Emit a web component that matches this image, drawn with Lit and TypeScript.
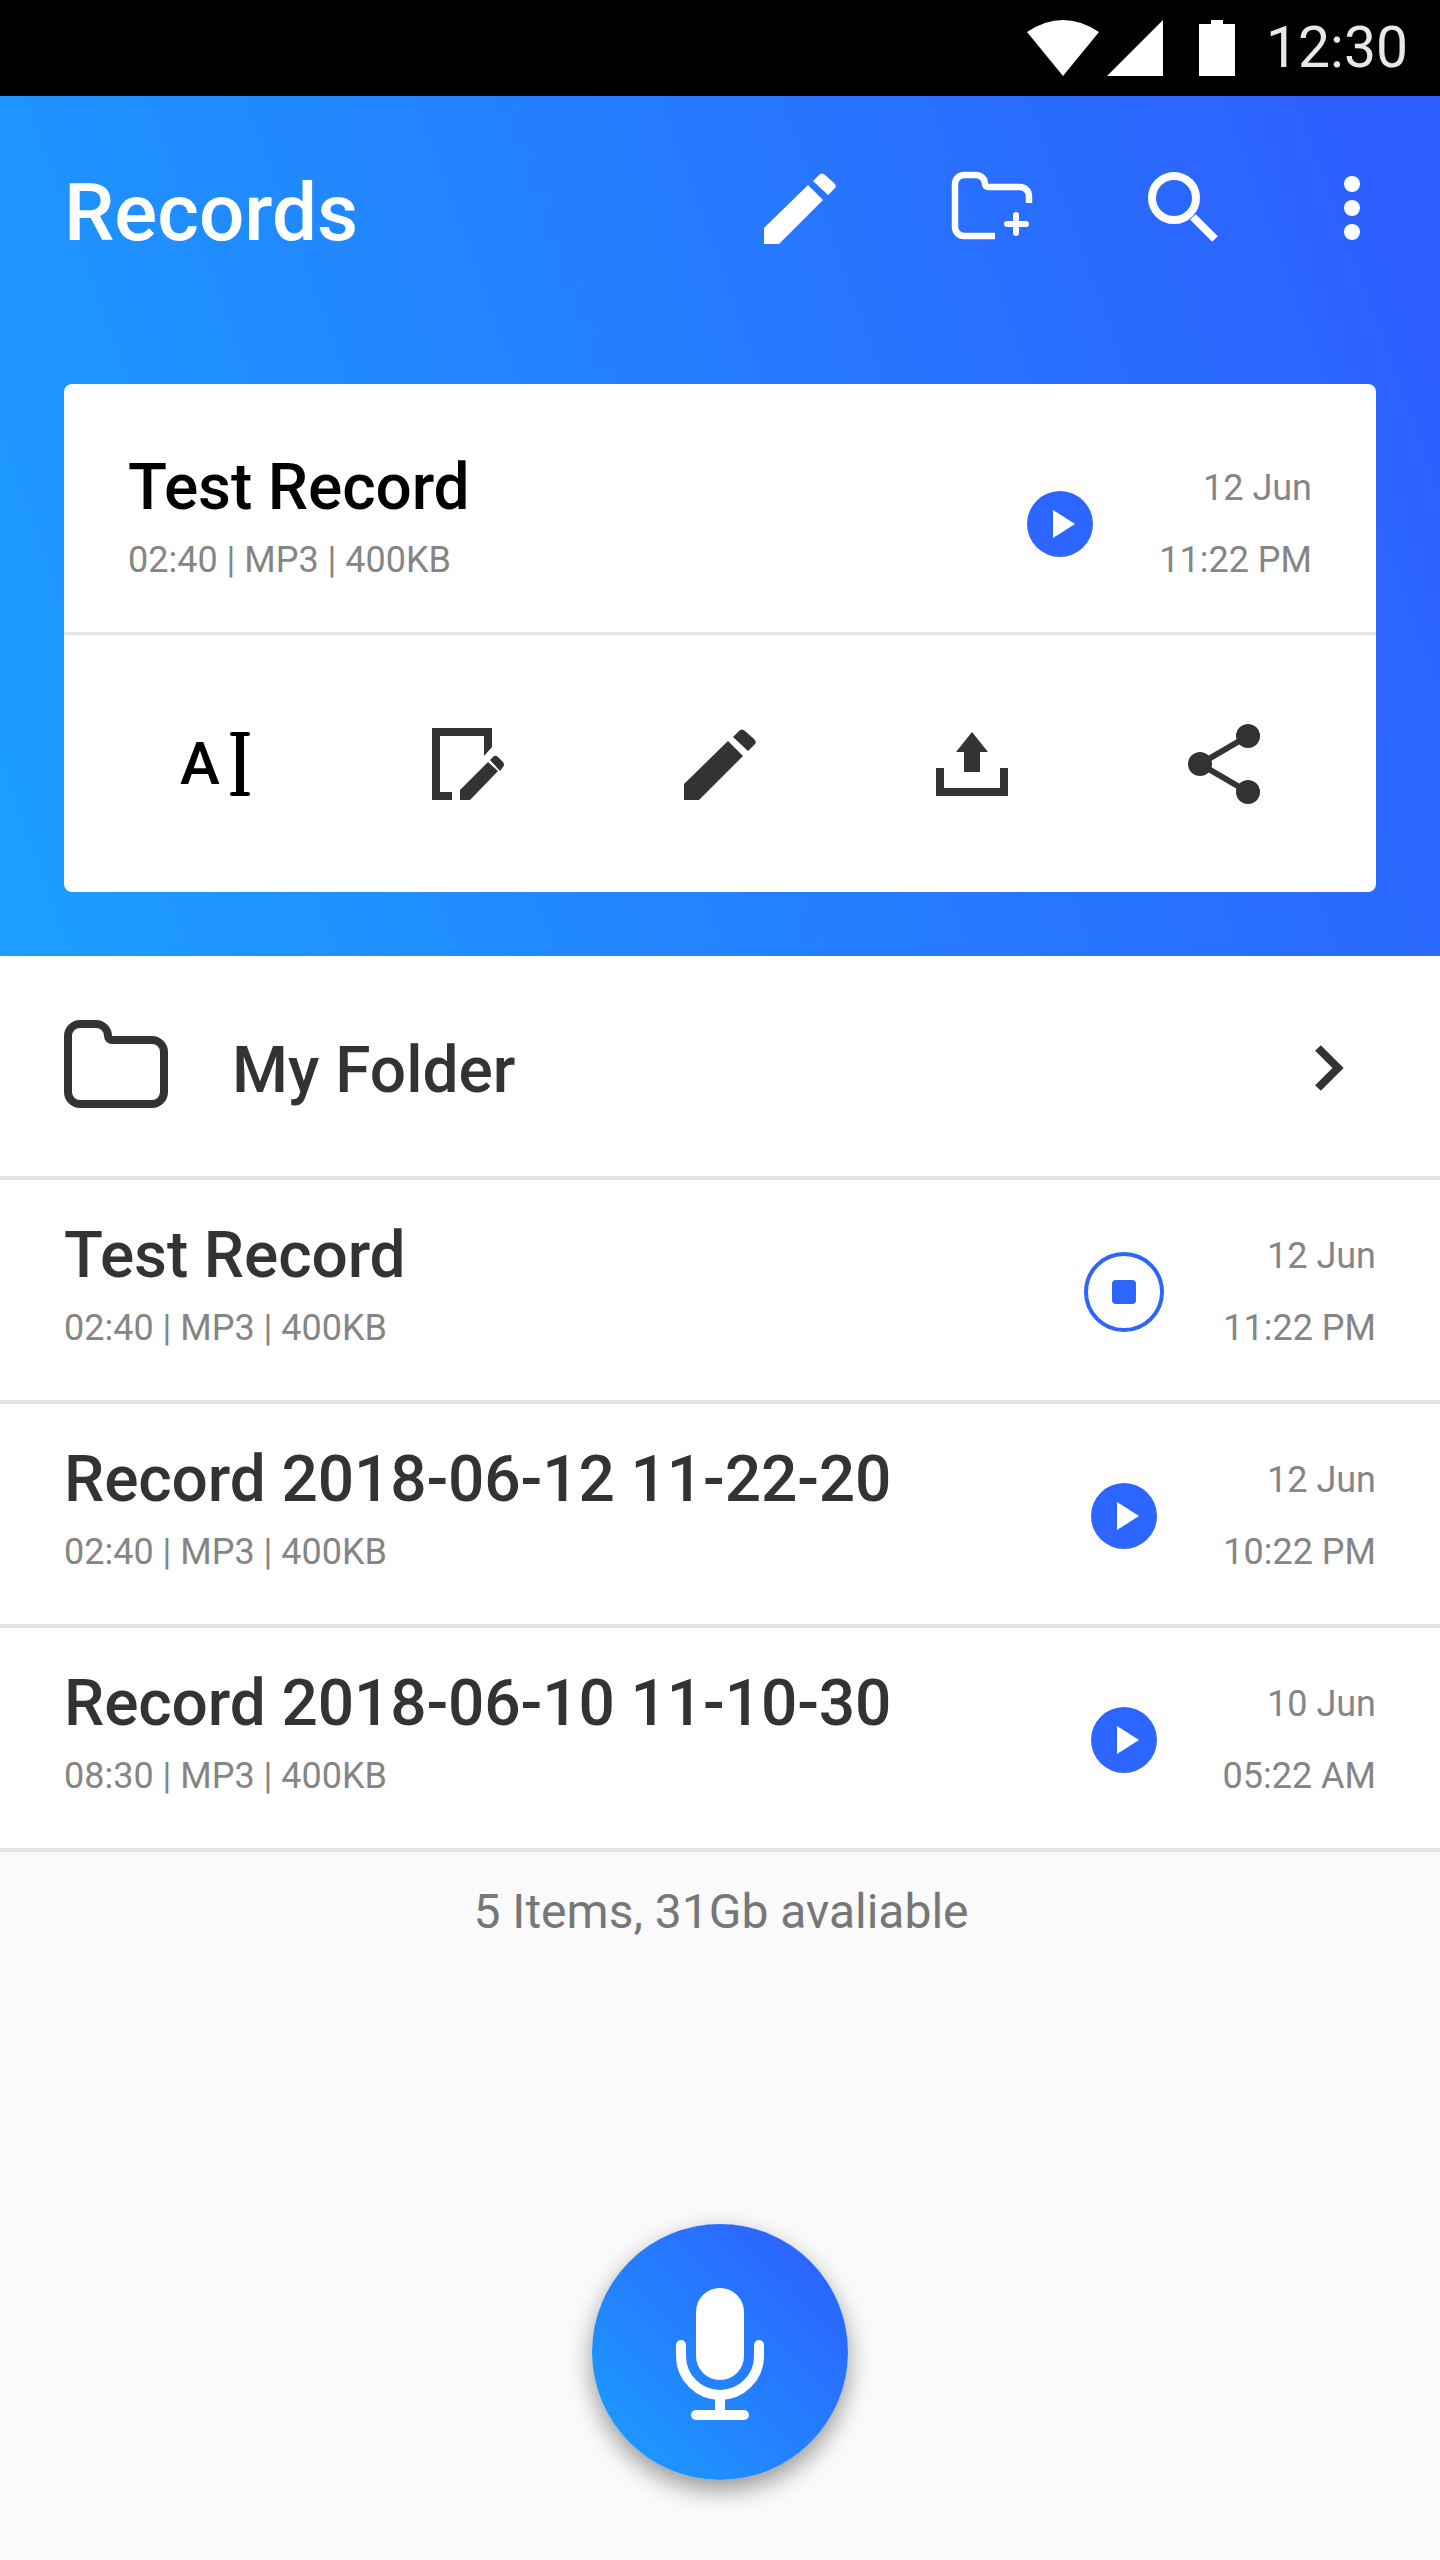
import { LitElement, html, css, svg } from "lit";
import { customElement } from "lit/decorators.js";

const pencil = svg`<path d="M0 56 44 13 59 28 15 72H0Z"/><path d="M49 9 55 3Q58 0 61 3L70 11Q73 14 71 16L64 23Z"/>`;

const records = [
  { title: "Test Record", meta: "02:40 | MP3 | 400KB", day: "12 Jun", time: "11:22 PM", playing: true },
  { title: "Record 2018-06-12 11-22-20", meta: "02:40 | MP3 | 400KB", day: "12 Jun", time: "10:22 PM", playing: false },
  { title: "Record 2018-06-10 11-10-30", meta: "08:30 | MP3 | 400KB", day: "10 Jun", time: "05:22 AM", playing: false },
];

@customElement("app-root")
export class AppRoot extends LitElement {
  static styles = css`
    :host {
      display: block;
      width: 1440px;
      height: 2560px;
      background: #fafafa;
      font-family: Roboto, sans-serif;
      overflow: hidden;
    }

    svg {
      display: block;
      flex: none;
    }

    .status {
      display: flex;
      justify-content: flex-end;
      align-items: center;
      height: 96px;
      padding-right: 32px;
      background: #000;
      color: #e8e8e8;
      font-size: 57px;
      line-height: 96px;
      gap: 27px;
    }

    .status svg {
      width: 220px;
      height: 64px;
      fill: #fff;
    }

    .hero {
      height: 860px;
      box-sizing: border-box;
      padding-top: 64px;
      background: linear-gradient(70deg, #1b9fff, #2e5cff);
    }

    .bar {
      display: flex;
      align-items: center;
      padding: 0 40px 0 64px;
      height: 96px;
    }

    .bar h1 {
      flex: 1;
      margin: 10px 0 0;
      font-size: 80px;
      line-height: 96px;
      font-weight: 500;
      color: #fff;
    }

    .tools {
      display: flex;
      gap: 96px;
      fill: #fff;
    }

    .tools svg {
      width: 96px;
      height: 96px;
    }

    .tools .more {
      margin-left: -24px;
    }

    .card {
      margin: 128px 64px 0;
      background: #fff;
      border-radius: 8px;
    }

    .rec {
      display: flex;
      align-items: flex-start;
      padding: 34px 64px 0;
      height: 220px;
      box-sizing: border-box;
      background: #fff;
    }

    .card .rec {
      padding-top: 62px;
      background: none;
      border-bottom: 3px solid #e6e6e6;
      box-sizing: content-box;
      height: 186px;
    }

    .info {
      flex: 1;
      min-width: 0;
    }

    .title {
      margin-top: 2px;
      font-size: 64px;
      line-height: 80px;
      font-weight: 500;
      letter-spacing: -0.12px;
      color: #333;
      white-space: nowrap;
    }

    .card .title {
      color: #000;
    }

    .meta {
      font-size: 36px;
      line-height: 64px;
      color: #858585;
      white-space: nowrap;
    }

    .btn {
      width: 80px;
      height: 80px;
      margin-top: 38px;
    }

    .when {
      width: 212px;
      margin-top: 6px;
      font-size: 36px;
      line-height: 72px;
      color: #858585;
      text-align: right;
    }

    .actions {
      display: grid;
      grid-template-columns: repeat(5, 252px);
      justify-items: center;
      padding: 81px 26px 80px;
      fill: #333;
    }

    .actions svg {
      width: 96px;
      height: 96px;
    }

    .actions text {
      font-family: Roboto, sans-serif;
      font-size: 60px;
      font-weight: 500;
      fill: #000;
    }

    .folder {
      display: flex;
      align-items: center;
      gap: 64px;
      height: 220px;
      padding: 0 96px 0 64px;
      background: #fff;
    }

    .folder .name {
      flex: 1;
      margin-top: 10px;
      font-size: 64px;
      line-height: 80px;
      font-weight: 500;
      color: #333;
    }

    .folder .ficon {
      width: 104px;
      height: 88px;
      margin-bottom: 4px;
    }

    .folder .chev {
      width: 48px;
      height: 64px;
      margin-top: 4px;
    }

    .line {
      height: 4px;
      background: #e5e5e5;
    }

    .foot {
      padding: 12px 0 0 2px;
      font-size: 48px;
      line-height: 96px;
      color: #777;
      text-align: center;
    }

    .fab {
      width: 256px;
      height: 256px;
      margin: 264px auto 0;
      border-radius: 50%;
      background: linear-gradient(45deg, #1b9fff, #2e5cff);
      box-shadow: 0 10px 24px rgba(0, 0, 0, 0.4);
    }

    .fab svg {
      width: 256px;
      height: 256px;
    }
  `;

  renderPlay() {
    return html`<svg class="btn" viewBox="0 0 80 80">
      <circle cx="40" cy="40" r="33" fill="#2d66ff"/>
      <path d="M33 26 55 40 33 54Z" fill="#fff"/>
    </svg>`;
  }

  renderStop() {
    return html`<svg class="btn" viewBox="0 0 80 80">
      <circle cx="40" cy="40" r="38" fill="none" stroke="#2d66ff" stroke-width="4"/>
      <rect x="28" y="28" width="24" height="24" rx="4" fill="#2d66ff"/>
    </svg>`;
  }

  renderRec(r: (typeof records)[number]) {
    return html`<div class="rec">
      <div class="info">
        <div class="title">${r.title}</div>
        <div class="meta">${r.meta}</div>
      </div>
      ${r.playing ? this.renderStop() : this.renderPlay()}
      <div class="when">${r.day}<br />${r.time}</div>
    </div>`;
  }

  render() {
    return html`
      <div class="status">
        <svg viewBox="1020 16 220 64">
          <path d="M1028 32Q1064 8 1100 32L1064 76Z"/>
          <path d="M1108 76 1164 20V76Z"/>
          <path d="M1200 24H1212V20H1224V24H1236V76H1200Z"/>
        </svg>
        <span>12:30</span>
      </div>

      <div class="hero">
        <div class="bar">
          <h1>Records</h1>
          <div class="tools">
            <svg viewBox="-12 -12 96 96">${pencil}</svg>
            <svg viewBox="944 160 96 96">
              <path fill="none" stroke="#fff" stroke-width="6.5" d="M995 236H964A9 9 0 0 1 955 227V184A9 9 0 0 1 964 175H976A9 9 0 0 1 985 184A3 3 0 0 0 988 187H1020A9 9 0 0 1 1029 196V203"/>
              <path fill="none" stroke="#fff" stroke-width="6" stroke-linecap="round" d="M1007 224H1026M1016 215V233"/>
            </svg>
            <svg viewBox="1136 160 96 96">
              <circle cx="1174" cy="198" r="22" fill="none" stroke="#fff" stroke-width="8"/>
              <path fill="none" stroke="#fff" stroke-width="8" d="M1193 217 1215 239"/>
            </svg>
            <svg class="more" viewBox="1304 160 96 96">
              <circle cx="1352" cy="184" r="8"/>
              <circle cx="1352" cy="208" r="8"/>
              <circle cx="1352" cy="232" r="8"/>
            </svg>
          </div>
        </div>

        <div class="card">
          ${this.renderRec({ ...records[0], playing: false })}
          <div class="actions">
            <svg viewBox="168 716 96 96">
              <text x="180" y="784">A</text>
              <rect x="230" y="732" width="20" height="4" rx="2" fill="#000"/>
              <rect x="236" y="734" width="8" height="60" fill="#000"/>
              <rect x="230" y="792" width="20" height="4" rx="2" fill="#000"/>
            </svg>
            <svg viewBox="420 716 96 96">
              <path d="M432 728H492V747L484 756V736H440V792H452V800H432Z"/>
              <path d="M460 790 488 762 498 771 470 800H460Z"/>
              <path d="M490 760 494 756Q496 755 498 757L503 762Q505 765 503 767L500 771Z"/>
            </svg>
            <svg viewBox="-12 -12 96 96">${pencil}</svg>
            <svg viewBox="924 716 96 96">
              <path d="M936 768H944V788H1000V768H1008V796H936Z"/>
              <path d="M972 732 988 752H980V772H964V752H956Z"/>
            </svg>
            <svg viewBox="1176 716 96 96">
              <circle cx="1248" cy="736" r="12"/>
              <circle cx="1200" cy="764" r="12"/>
              <circle cx="1248" cy="792" r="12"/>
              <path fill="none" stroke="#333" stroke-width="6" d="M1248 736 1200 764 1248 792"/>
            </svg>
          </div>
        </div>
      </div>

      <div class="folder">
        <svg class="ficon" viewBox="64 1020 104 88">
          <path fill="none" stroke="#333" stroke-width="8" d="M80 1024H96A12 12 0 0 1 108 1036A4 4 0 0 0 112 1040H152A12 12 0 0 1 164 1052V1092A12 12 0 0 1 152 1104H80A12 12 0 0 1 68 1092V1036A12 12 0 0 1 80 1024Z"/>
        </svg>
        <div class="name">My Folder</div>
        <svg class="chev" viewBox="1296 1036 48 64">
          <path fill="none" stroke="#333" stroke-width="8" d="M1318 1048 1338 1068 1318 1088"/>
        </svg>
      </div>
      <div class="line"></div>

      ${records.map((r) => html`${this.renderRec(r)}<div class="line"></div>`)}

      <div class="foot">5 Items, 31Gb avaliable</div>

      <div class="fab">
        <svg viewBox="592 2224 256 256">
          <rect x="696" y="2288" width="48" height="92" rx="24" fill="#fff"/>
          <path fill="none" stroke="#fff" stroke-width="10" stroke-linecap="round" d="M681 2345V2356A39 39 0 0 0 759 2356V2345"/>
          <path d="M715 2395H725V2412H715Z" fill="#fff"/>
          <rect x="691" y="2410" width="58" height="10" rx="5" fill="#fff"/>
        </svg>
      </div>
    `;
  }
}
